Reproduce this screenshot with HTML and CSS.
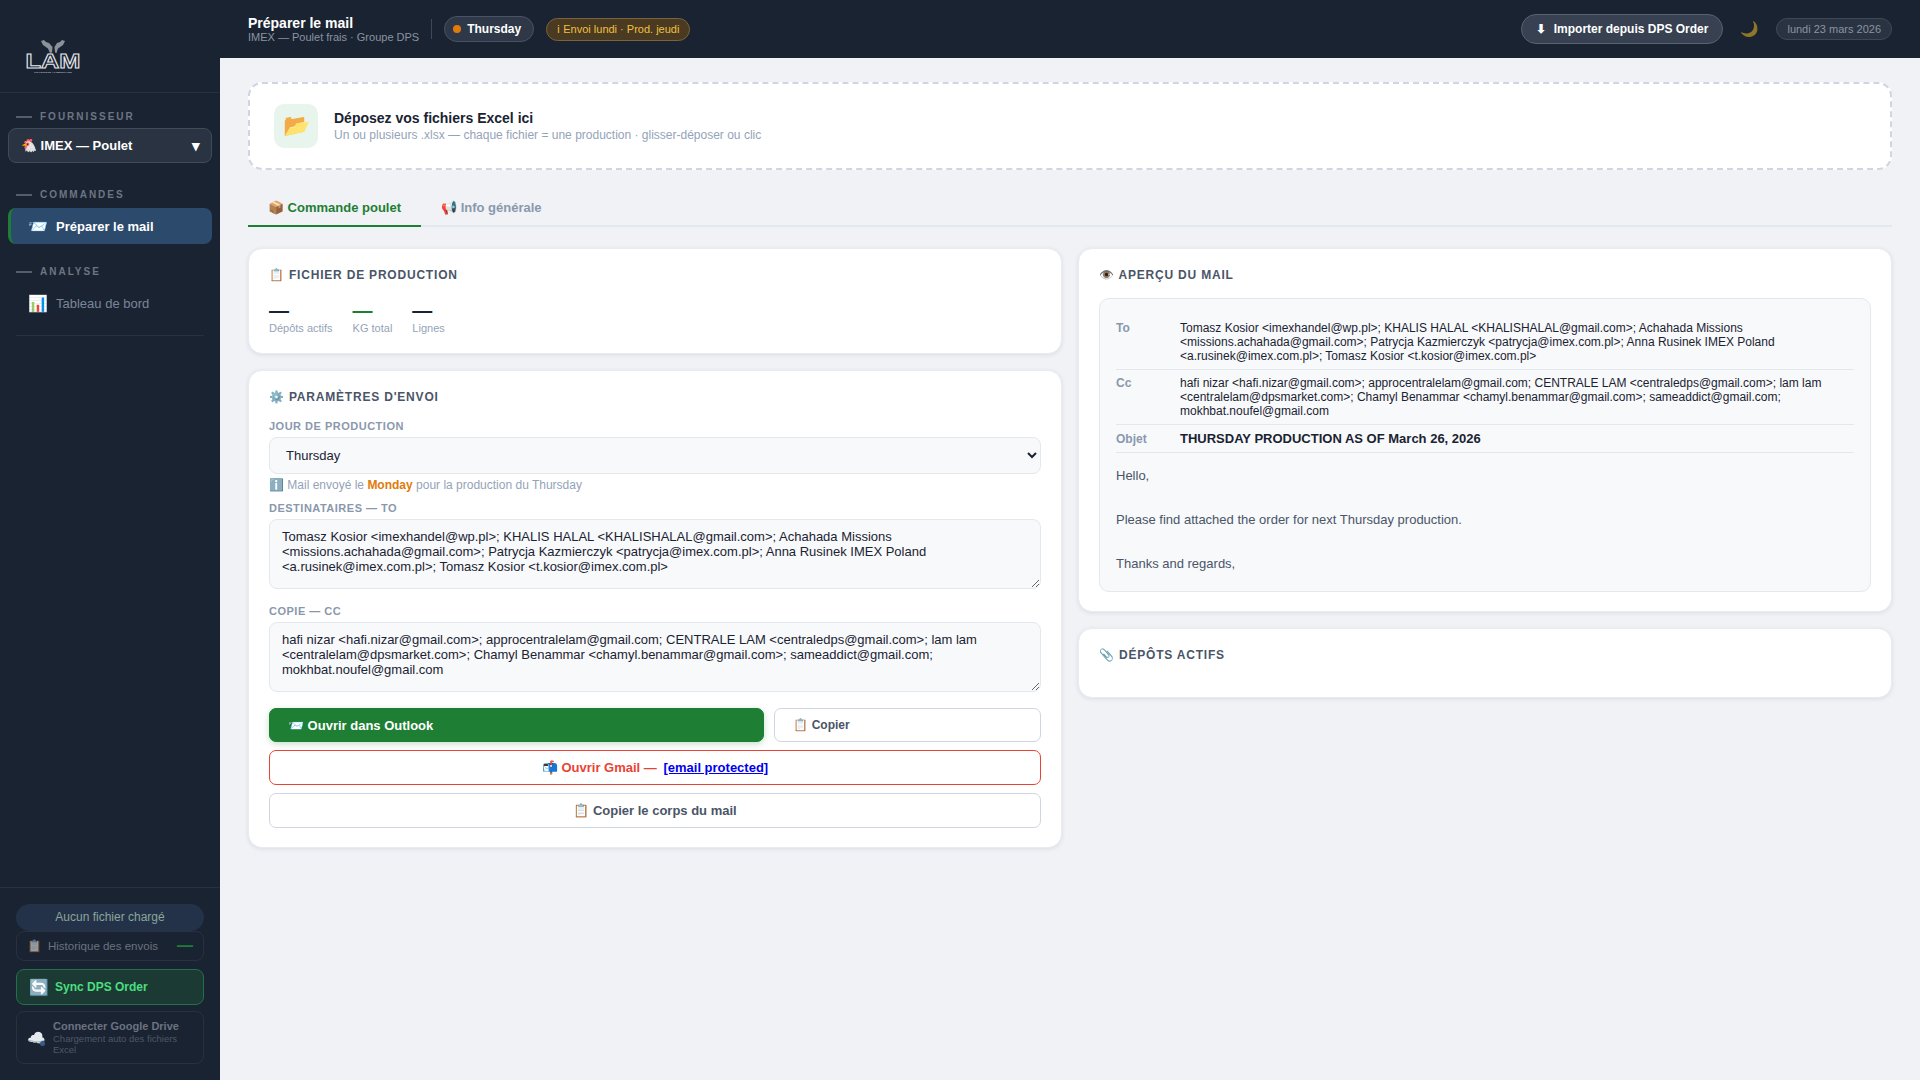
FILE: index.html
```html
<!DOCTYPE html>
<html lang="fr">
<head>
<meta charset="utf-8">
<title>Préparer le mail</title>
<link rel="stylesheet" href="styles.css">
</head>
<body>
<div class="app">
  <aside class="sidebar">
    <div class="logo">
      <svg class="logo-svg" width="56" height="34" viewBox="0 0 56 34" aria-label="LAM">
        <path class="hand" d="M16 1 L19 0 L21 2 L24 3 L27.500 7 L27 12.500 L25 13 L23 8.500 L18 5 Z"/>
        <path class="hand" d="M40 1 L37 0 L35 2 L32 3 L29.500 7 L30 12.500 L31.500 13 L33 8.500 L38 5 Z"/>
        <text class="logo-text" x="0.500" y="28" textLength="55" lengthAdjust="spacingAndGlyphs">LAM</text>
        <text class="logo-tag" x="9" y="32.500" textLength="38" lengthAdjust="spacingAndGlyphs">GROSSISTE ALIMENTAIRE</text>
      </svg>
    </div>
    <div class="side-label">Fournisseur</div>
    <div class="side-select-wrap">
      <div class="side-select"><span>🐔 IMEX — Poulet</span><span class="side-arrow">▾</span></div>
    </div>
    <div class="side-label">Commandes</div>
    <a class="nav-item active"><span class="nav-ico">📨</span>Préparer le mail</a>
    <div class="side-label">Analyse</div>
    <a class="nav-item"><span class="nav-ico">📊</span>Tableau de bord</a>
    <div class="side-divider"></div>
    <div class="side-footer">
      <div class="file-pill">Aucun fichier chargé</div>
      <div class="history"><span class="hist-ico">📋</span><span class="hist-text">Historique des envois</span><span class="hist-count">—</span></div>
      <div class="sync"><span class="sync-ico">🔄</span>Sync DPS Order</div>
      <div class="drive">
        <span class="drive-ico">☁️<i class="drive-dot"></i></span>
        <span class="drive-text"><b>Connecter Google Drive</b><small>Chargement auto des fichiers Excel</small></span>
      </div>
    </div>
  </aside>
  <div class="main">
    <header class="topbar">
      <div class="top-title"><strong>Préparer le mail</strong><span>IMEX — Poulet frais · Groupe DPS</span></div>
      <div class="top-sep"></div>
      <div class="day-pill"><i class="day-dot"></i>Thursday</div>
      <div class="info-pill">ℹ Envoi lundi · Prod. jeudi</div>
      <div class="top-right">
        <button class="import-btn"><span class="import-ico">⬇</span>Importer depuis DPS Order</button>
        <span class="moon">🌙</span>
        <span class="date-pill">lundi 23 mars 2026</span>
      </div>
    </header>
    <main class="content">
      <section class="dropzone">
        <div class="drop-ico">📂</div>
        <div class="drop-text"><div class="drop-title">Déposez vos fichiers Excel ici</div>
        <div class="drop-sub">Un ou plusieurs .xlsx — chaque fichier = une production · glisser-déposer ou clic</div></div>
      </section>
      <nav class="tabs">
        <a class="tab active">📦 Commande poulet</a>
        <a class="tab">📢 Info générale</a>
      </nav>
      <div class="columns">
        <div class="col">
          <section class="card">
            <h2 class="card-title">📋 Fichier de production</h2>
            <div class="stats">
              <div class="stat"><div class="stat-val">—</div><div class="stat-lab">Dépôts actifs</div></div>
              <div class="stat"><div class="stat-val green">—</div><div class="stat-lab">KG total</div></div>
              <div class="stat"><div class="stat-val">—</div><div class="stat-lab">Lignes</div></div>
            </div>
          </section>
          <section class="card">
            <h2 class="card-title">⚙️ Paramètres d'envoi</h2>
            <label class="f-label">Jour de production</label>
            <select class="f-select"><option>Thursday</option></select>
            <div class="hint">ℹ️ Mail envoyé le <b>Monday</b> pour la production du Thursday</div>
            <label class="f-label f-to">Destinataires — To</label>
            <textarea class="f-area" spellcheck="false">Tomasz Kosior &lt;imexhandel@wp.pl&gt;; KHALIS HALAL &lt;KHALISHALAL@gmail.com&gt;; Achahada Missions &lt;missions.achahada@gmail.com&gt;; Patrycja Kazmierczyk &lt;patrycja@imex.com.pl&gt;; Anna Rusinek IMEX Poland &lt;a.rusinek@imex.com.pl&gt;; Tomasz Kosior &lt;t.kosior@imex.com.pl&gt;</textarea>
            <label class="f-label f-cc">Copie — Cc</label>
            <textarea class="f-area" spellcheck="false">hafi nizar &lt;hafi.nizar@gmail.com&gt;; approcentralelam@gmail.com; CENTRALE LAM &lt;centraledps@gmail.com&gt;; lam lam &lt;centralelam@dpsmarket.com&gt;; Chamyl Benammar &lt;chamyl.benammar@gmail.com&gt;; sameaddict@gmail.com; mokhbat.noufel@gmail.com</textarea>
            <div class="btn-row">
              <button class="btn btn-green">📨 Ouvrir dans Outlook</button>
              <button class="btn btn-ghost btn-left">📋 Copier</button>
            </div>
            <button class="btn btn-gmail">📬 Ouvrir Gmail — <a class="mail-link" href="#">[email protected]</a></button>
            <button class="btn btn-wide">📋 Copier le corps du mail</button>
          </section>
        </div>
        <div class="col">
          <section class="card">
            <h2 class="card-title">👁️ Aperçu du mail</h2>
            <div class="preview">
              <div class="p-row"><span class="p-key">To</span><span class="p-val">Tomasz Kosior &lt;imexhandel@wp.pl&gt;; KHALIS HALAL &lt;KHALISHALAL@gmail.com&gt;; Achahada Missions &lt;missions.achahada@gmail.com&gt;; Patrycja Kazmierczyk &lt;patrycja@imex.com.pl&gt;; Anna Rusinek IMEX Poland &lt;a.rusinek@imex.com.pl&gt;; Tomasz Kosior &lt;t.kosior@imex.com.pl&gt;</span></div>
              <div class="p-row"><span class="p-key">Cc</span><span class="p-val">hafi nizar &lt;hafi.nizar@gmail.com&gt;; approcentralelam@gmail.com; CENTRALE LAM &lt;centraledps@gmail.com&gt;; lam lam &lt;centralelam@dpsmarket.com&gt;; Chamyl Benammar &lt;chamyl.benammar@gmail.com&gt;; sameaddict@gmail.com; mokhbat.noufel@gmail.com</span></div>
              <div class="p-row p-subject"><span class="p-key">Objet</span><span class="p-val">THURSDAY PRODUCTION AS OF March 26, 2026</span></div>
              <div class="p-body">Hello,

Please find attached the order for next Thursday production.

Thanks and regards,</div>
            </div>
          </section>
          <section class="card card-deps">
            <h2 class="card-title">📎 Dépôts actifs</h2>
          </section>
        </div>
      </div>
    </main>
  </div>
</div>
</body>
</html>
```
FILE: styles.css
```css
* { box-sizing: border-box; }
html, body { margin: 0; height: 100%; }
body { font-family: "Liberation Sans", Arial, sans-serif; background: #f0f2f6; color: #1a2332; overflow: hidden; }
.app { display: flex; height: 1080px; }

/* Sidebar */
.sidebar { width: 220px; flex: none; background: #1a2332; display: flex; flex-direction: column; }
.logo { height: 93px; border-bottom: 1px solid #273140; padding: 40px 0 0 25px; }
.logo-svg { display: block; }
.hand { fill: #8c929b; }
.logo-text { font: 700 19.500px "Liberation Sans", sans-serif; fill: #1a2332; stroke: #e6e8ec; stroke-width: 0.9px; }
.logo-tag { font: 700 2.500px "Liberation Sans", sans-serif; fill: #aab0b8; }
.side-label { display: flex; align-items: center; gap: 8px; padding: 0 16px; font-size: 10px; line-height: 12px; font-weight: 700; letter-spacing: 2px; text-transform: uppercase; color: #6d7582; margin: 18px 0 7px; }
.side-label::before { content: ""; width: 16px; height: 2px; background: #565e6c; }
.side-select-wrap { padding: 0 8px; margin: -2px 0 8px; }
.side-select { display: flex; align-items: center; justify-content: space-between; height: 35px; padding: 0 11px 0 12px; background: #2a3342; color: #fff; border: 1px solid #414a59; border-radius: 8px; font-size: 13px; font-weight: 700; }
.side-arrow { font-size: 15px; line-height: 15px; }
.nav-item { display: flex; align-items: center; height: 36px; margin: 0 8px; padding-left: 20px; border-radius: 8px; font-size: 13px; color: #7a8698; }
.nav-ico { width: 28px; font-size: 16px; flex: none; }
.nav-item.active { background: #2c4a6b; color: #fff; font-weight: 700; border-left: 3px solid #1e7e34; padding-left: 17px; margin-bottom: 4px; }
.side-divider { height: 1px; margin: 14px 16px 0; background: #273140; }
.side-footer { margin-top: auto; border-top: 1px solid #273140; padding: 16px; display: flex; flex-direction: column; }
.file-pill { height: 27px; line-height: 26px; background: #233248; border-radius: 14px; text-align: center; font-size: 12px; color: #8ba598; }
.history { height: 30px; border: 1px solid #273140; border-radius: 8px; display: flex; align-items: center; padding: 0 10px; font-size: 11.500px; color: #6b7280; margin-bottom: 8px; }
.hist-ico { width: 21px; opacity: .55; font-size: 12px; flex: none; }
.hist-text { flex: 1; }
.hist-count { color: #1e7e34; font-size: 16px; font-weight: 700; }
.sync { height: 36px; display: flex; align-items: center; padding: 0 12px; background: #1c3a34; border: 1px solid #24704a; border-radius: 8px; color: #4ade80; font-size: 12px; font-weight: 700; margin-bottom: 6px; }
.sync-ico { width: 26px; font-size: 16px; flex: none; }
.drive { height: 53px; display: flex; align-items: center; padding: 0 10px; border: 1px solid #273140; border-radius: 8px; }
.drive-ico { position: relative; width: 26px; font-size: 15px; flex: none; }
.drive-dot { position: absolute; left: 13px; top: 12px; width: 5px; height: 5px; border-radius: 50%; background: #3d5a80; }
.drive-text { display: block; line-height: 11px; color: #6b7280; }
.drive-text b { display: block; font-size: 11px; line-height: 13px; }
.drive-text small { display: block; font-size: 9.500px; color: #4f5766; }

/* Top bar */
.main { flex: 1; min-width: 0; display: flex; flex-direction: column; }
.topbar { height: 58px; flex: none; background: #1a2332; display: flex; align-items: center; padding: 0 28px; }
.top-title { display: flex; flex-direction: column; }
.top-title strong { font-size: 14px; line-height: 16px; color: #fff; }
.top-title span { font-size: 11px; line-height: 13px; color: #8a93a1; }
.top-sep { width: 1px; height: 20px; background: #3f4856; margin: 0 12px; }
.day-pill { height: 26px; display: flex; align-items: center; gap: 6px; padding: 0 12px 0 8px; background: #2e3848; border: 1px solid #4a5362; border-radius: 13px; color: #fff; font-size: 12px; font-weight: 700; }
.day-dot { width: 8px; height: 8px; border-radius: 50%; background: #e07b0a; }
.info-pill { height: 23px; line-height: 21px; margin-left: 12px; padding: 0 10px; background: #4a3a22; border: 1px solid #7d6338; border-radius: 12px; color: #f0c040; font-size: 11px; }
.top-right { margin-left: auto; display: flex; align-items: center; }
.import-btn { height: 30px; padding: 0 14px; background: #374151; border: 1px solid #5a6270; border-radius: 15px; color: #fff; font: 700 12px "Liberation Sans", sans-serif; }
.import-ico { margin-right: 8px; }
.moon { width: 53px; text-align: center; font-size: 15px; opacity: .5; }
.date-pill { height: 22px; line-height: 20px; padding: 0 10px; background: #2a3342; border: 1px solid #3f4856; border-radius: 11px; font-size: 11px; color: #8a93a1; }

/* Content */
.content { flex: 1; padding: 24px 28px; }
.dropzone { height: 88px; display: flex; align-items: center; gap: 16px; padding: 0 24px; background: #fff; border: 2px dashed #d0d5e2; border-radius: 14px; }
.drop-ico { width: 44px; height: 44px; border-radius: 10px; background: #e8f5ec; display: flex; align-items: center; justify-content: center; font-size: 22px; }
.drop-title { font-size: 14px; font-weight: 700; line-height: 18px; color: #1a2332; }
.drop-sub { font-size: 12px; line-height: 16px; color: #94a3b8; }
.tabs { display: flex; margin-top: 20px; height: 37px; border-bottom: 2px solid #e3e8ee; }
.tab { padding: 0 20px; height: 37px; line-height: 35px; font-size: 13px; font-weight: 700; color: #8a98ad; }
.tab.active { color: #1e7e34; border-bottom: 2px solid #1e7e34; }
.columns { display: grid; grid-template-columns: 1fr 1fr; gap: 16px; margin-top: 21px; }
.col { display: flex; flex-direction: column; gap: 16px; min-width: 0; }
.card { background: #fff; border: 1px solid #e8ebf0; border-radius: 14px; padding: 18px 20px 19px; box-shadow: 0 1px 4px rgba(30, 40, 60, .1); }
.card-title { margin: 0; font-size: 12px; line-height: 16px; font-weight: 700; letter-spacing: .8px; text-transform: uppercase; color: #4a5568; }

.stats { display: flex; gap: 20px; margin-top: 16px; }
.stat-val { font-size: 20px; line-height: 23px; font-weight: 700; color: #1a2332; }
.stat-val.green { color: #1e7e34; }
.stat-lab { font-size: 11px; line-height: 12px; color: #94a3b8; }

.f-label { display: block; margin-top: 15px; font-size: 11px; line-height: 12px; font-weight: 700; letter-spacing: .5px; text-transform: uppercase; color: #8a98ad; }
.f-to { margin-top: 10px; }
.f-cc { margin-top: 16px; }
.f-select { display: block; width: 100%; height: 37px; margin-top: 5px; padding: 0 12px; background: #f8f9fb; border: 1px solid #e3e8ee; border-radius: 8px; font: 13px "Liberation Sans", sans-serif; color: #1a2332; }
.hint { margin-top: 4px; font-size: 12px; line-height: 14px; color: #94a3b8; }
.hint b { color: #e07b0a; }
.f-area { display: block; width: 100%; height: 70px; margin-top: 5px; padding: 9px 12px; background: #f8f9fb; border: 1px solid #e3e8ee; border-radius: 8px; font: 13px/15px "Liberation Sans", sans-serif; color: #1a2332; resize: vertical; overflow: hidden; }
.btn-row { display: grid; grid-template-columns: 65fr 35fr; gap: 10px; margin-top: 16px; }
.btn { display: block; height: 35px; width: 100%; border-radius: 7px; font: 700 13px "Liberation Sans", sans-serif; background: #fff; border: 1px solid #d0d5e2; color: #4a5568; }
.btn-row .btn { height: 34px; }
.btn-green { background: #1e7e34; border-color: #1e7e34; color: #fff; text-align: left; padding: 0 18px; box-shadow: 0 2px 6px rgba(30, 126, 52, .25); }
.btn-left { text-align: left; padding: 0 18px; font-size: 12px; }
.btn-gmail { margin-top: 8px; border-color: #ea4335; color: #ea4335; }
.btn-wide { margin-top: 8px; }
.mail-link { margin-left: 3px; color: #0000ee; text-decoration: underline; }

.preview { margin-top: 15px; padding: 16px 16px 0; height: 294px; background: #f8f9fb; border: 1px solid #e3e8ee; border-radius: 10px; }
.p-row { display: flex; padding: 6px 0; border-bottom: 1px solid #e3e8ee; font-size: 12px; line-height: 14px; }
.p-key { width: 64px; flex: none; font-weight: 700; color: #8a98ad; }
.p-val { color: #1a2332; }
.p-subject { padding: 5px 0; align-items: center; }
.p-subject .p-val { font-size: 13px; line-height: 17px; font-weight: 700; }
.p-body { margin-top: 12px; white-space: pre-line; font-size: 13px; line-height: 22px; color: #4a5568; }
.card-deps { height: 70px; }
```
